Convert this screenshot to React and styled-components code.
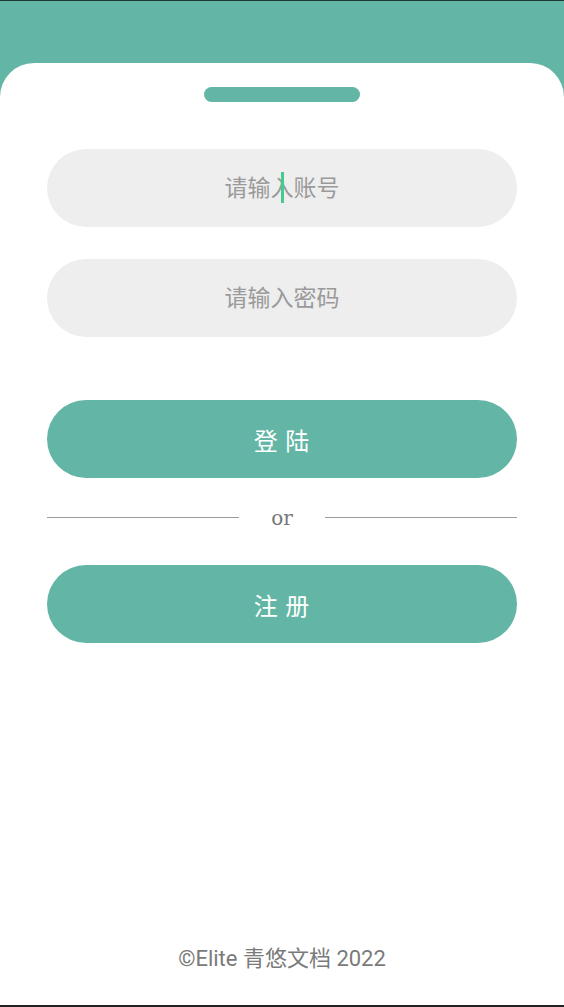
import React from "react";
import styled, { createGlobalStyle } from "styled-components";

const GREEN = "#63b6a5";

const Global = createGlobalStyle`
  html, body { margin: 0; padding: 0; }
  body { background: #fff; }
  * { box-sizing: border-box; }
`;

const Page = styled.div`
  width: 564px;
  height: 1007px;
  display: flex;
  flex-direction: column;
  background: ${GREEN};
  border-top: 1px solid #1d3b35;
  border-bottom: 2px solid #222;
  padding-top: 62px;
`;

const Card = styled.main`
  flex: 1;
  background: #fff;
  border-radius: 34px 34px 0 0;
  display: flex;
  flex-direction: column;
  align-items: center;
  padding: 24px 47px 0;
`;

const Handle = styled.div`
  width: 156px;
  height: 15px;
  border-radius: 8px;
  background: ${GREEN};
  margin-bottom: 47px;
`;

const Form = styled.form`
  width: 100%;
  display: flex;
  flex-direction: column;
`;

const Field = styled.div`
  position: relative;
  height: 78px;
  border-radius: 39px;
  background: #eeeeee;
  display: flex;
  align-items: center;
  justify-content: center;
  padding-bottom: 3px;
  margin-bottom: ${(p) => p.$mb || 0}px;
`;

const Placeholder = styled.span`
  font-family: "Noto Sans CJK SC", "Noto Sans", sans-serif;
  font-size: 23px;
  color: #9a9a9a;
  line-height: 1;
`;

const Caret = styled.span`
  position: absolute;
  left: 234px;
  top: 23px;
  width: 3px;
  height: 31px;
  background: #43cc8f;
`;

const Button = styled.button`
  height: 78px;
  border: none;
  border-radius: 39px;
  background: ${GREEN};
  color: #fff;
  font-family: "Noto Sans CJK SC", serif;
  font-size: 24px;
  letter-spacing: 1px;
  cursor: pointer;
  width: 100%;
`;

const Divider = styled.div`
  display: flex;
  align-items: center;
  gap: 32px;
  height: 38px;
  margin: 20px 0 29px;
`;

const Line = styled.span`
  flex: 1;
  height: 1px;
  background: #9c9c9c;
`;

const Or = styled.span`
  font-family: "DejaVu Serif", serif;
  font-size: 20px;
  color: #777;
  line-height: 1;
  padding-top: 2px;
`;

const Footer = styled.footer`
  margin-top: auto;
  padding-bottom: 34px;
  font-family: Roboto, "Noto Sans CJK SC", sans-serif;
  font-size: 22px;
  line-height: 24px;
  color: #7a7a7a;
`;

export default function App() {
  return (
    <>
      <Global />
      <Page>
        <Card>
          <Handle />
          <Form onSubmit={(e) => e.preventDefault()}>
            <Field $mb={32}>
              <Placeholder>请输入账号</Placeholder>
              <Caret />
            </Field>
            <Field $mb={63}>
              <Placeholder>请输入密码</Placeholder>
            </Field>
            <Button type="button">登 陆</Button>
            <Divider>
              <Line />
              <Or>or</Or>
              <Line />
            </Divider>
            <Button type="button">注 册</Button>
          </Form>
          <Footer>©Elite 青悠文档 2022</Footer>
        </Card>
      </Page>
    </>
  );
}
